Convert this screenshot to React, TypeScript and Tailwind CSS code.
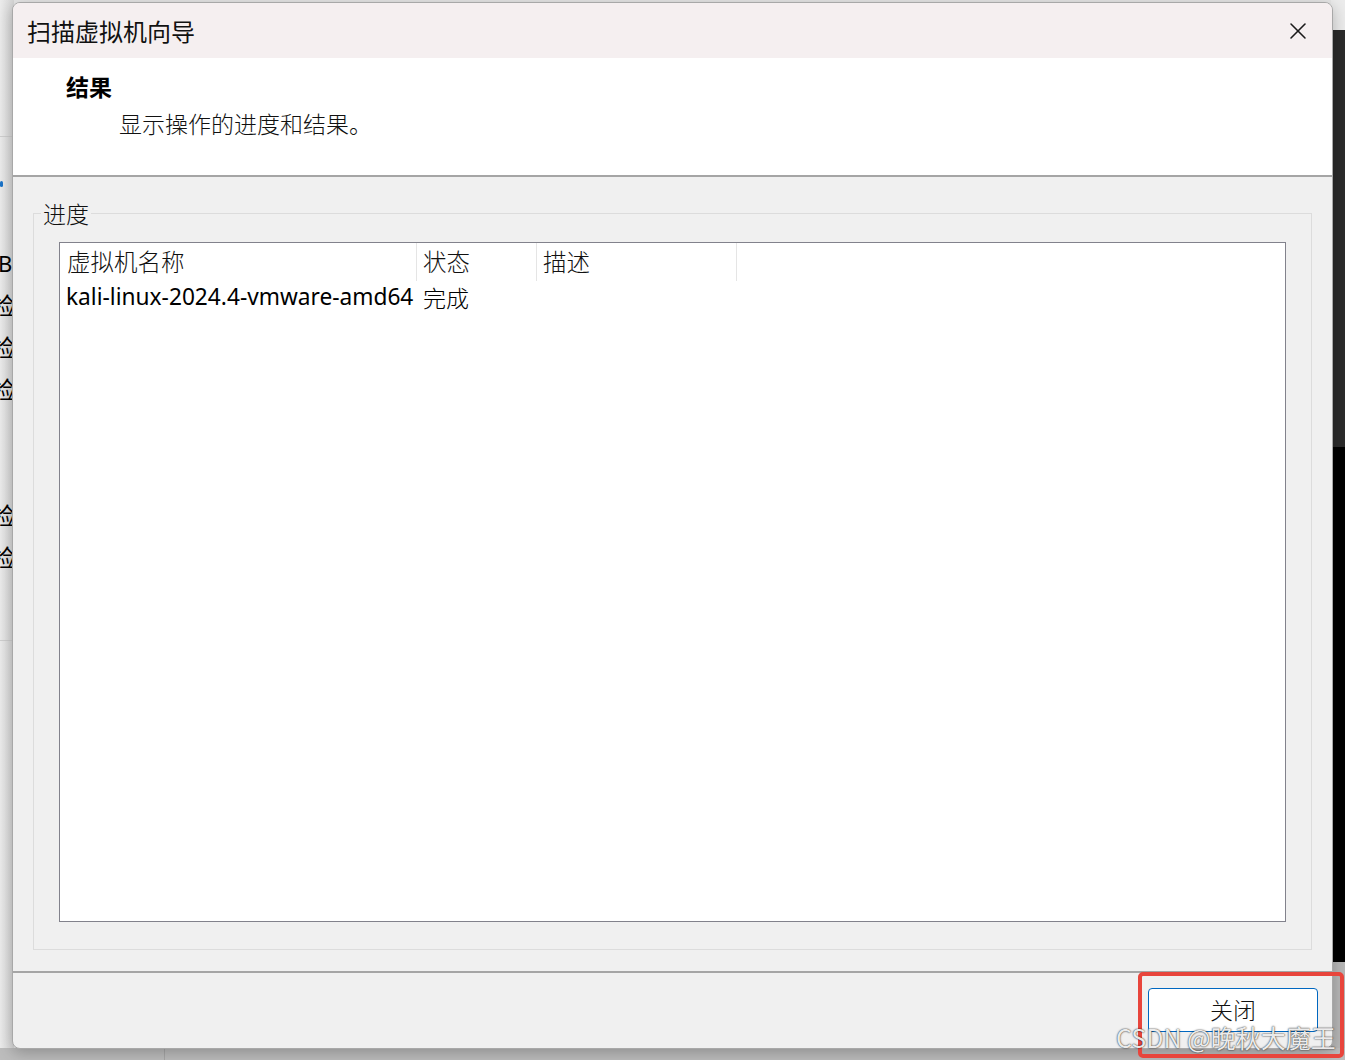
import { X } from "lucide-react";

const cjk = "font-['Noto_Sans_CJK_SC',sans-serif]";
const song = "font-['Noto_Sans_CJK_SC',sans-serif] font-light";

export default function App() {
  return (
    <div className="relative h-[1060px] w-[1345px] overflow-hidden bg-[#e6e6e6]">
      {/* app behind the dialog */}
      <div className="absolute left-0 top-0 h-full w-[14px] bg-gradient-to-r from-[#ececec] to-[#d6d6d6]">
        <div className="mt-[136px] h-px w-full bg-[#cfcfcf]" />
        <div className="mt-[44px] h-[6px] w-[3px] rounded-full bg-[#1a73c8]" />
        <div className={`${cjk} text-[24px] leading-[42px] text-black`}>
          <div className="-ml-[2px] mt-[55px] font-['Noto_Sans',sans-serif] text-[22px]">B</div>
          <div className="-ml-[8px]">检</div>
          <div className="-ml-[8px]">检</div>
          <div className="-ml-[8px]">检</div>
          <div className="-ml-[8px] mt-[84px]">检</div>
          <div className="-ml-[8px]">检</div>
        </div>
        <div className="mt-[62px] h-px w-full bg-[#cfcfcf]" />
      </div>
      <div className="absolute right-0 top-0 flex h-full w-[14px] flex-col">
        <div className="h-[30px] bg-[#ececec]" />
        <div className="h-[417px] bg-[#2b2b2b]" />
        <div className="h-[515px] bg-black" />
        <div className="flex-1 bg-[#b8b8b8]" />
      </div>
      <div className="absolute bottom-0 left-0 flex h-[12px] w-full bg-[#bdbdbd]">
        <div className="ml-[164px] h-full w-px bg-[#a8a8a8]" />
      </div>

      {/* dialog */}
      <div className="absolute left-[12px] top-[2px] flex h-[1047px] w-[1321px] flex-col overflow-hidden rounded-[8px] border border-[#a8a8a8] bg-[#f0f0f0] shadow-[0_4px_16px_rgba(0,0,0,0.25)]">
        <div className="flex h-[55px] shrink-0 items-center justify-between bg-[#f5eff0] pl-[14px] pr-[20px]">
          <span className={`${cjk} text-[24px] text-[#111]`}>扫描虚拟机向导</span>
          <X className="h-[28px] w-[28px] text-[#1a1a1a]" strokeWidth={1.3} />
        </div>
        <div className="h-[119px] shrink-0 border-b-2 border-[#a5a5a5] bg-white pl-[53px] pt-[12px]">
          <div className={`${cjk} text-[23px] font-semibold leading-[32px] text-black`}>结果</div>
          <div className={`${song} ml-[53px] mt-[5px] text-[23px] leading-[32px] text-[#111]`}>
            显示操作的进度和结果。
          </div>
        </div>
        <div className="flex flex-1 flex-col px-[20px] pt-[36px]">
          <div className="relative flex h-[737px] flex-col border border-[#dcdcdc] px-[25px] pb-[27px] pt-[28px]">
            <span className={`${song} absolute -top-[15px] left-[7px] bg-[#f0f0f0] px-[2px] text-[23px] leading-[28px] text-[#111]`}>
              进度
            </span>
            <div className="flex flex-1 flex-col border border-[#82828c] bg-white">
              <div className={`${song} flex h-[38px] items-center text-[23.5px] text-[#111]`}>
                <div className="flex h-full w-[357px] items-center border-r border-[#e5e5e5] pl-[7px]">虚拟机名称</div>
                <div className="flex h-full w-[120px] items-center border-r border-[#e5e5e5] pl-[6px]">状态</div>
                <div className="flex h-full w-[200px] items-center border-r border-[#e5e5e5] pl-[6px]">描述</div>
              </div>
              <div className="flex h-[32px] items-center text-[23px] text-black">
                <div className="w-[357px] whitespace-nowrap pl-[6px] font-['Noto_Sans',sans-serif] text-[22.7px]">
                  kali-linux-2024.4-vmware-amd64
                </div>
                <div className={`${song} pl-[6px]`}>完成</div>
              </div>
            </div>
          </div>
        </div>
        <div className="flex h-[77px] shrink-0 items-center justify-end border-t-2 border-[#a5a5a5] pr-[14px]">
          <button className={`${song} mb-[2px] h-[44px] w-[170px] rounded-[4px] border border-[#0067c0] bg-white text-[23px] text-[#111]`}>
            关闭
          </button>
        </div>
      </div>

      {/* annotation + watermark */}
      <div className="absolute left-[1138px] top-[972px] h-[86px] w-[206px] rounded-[5px] border-[4px] border-[#e8453c]" />
      <div className={`${cjk} absolute left-[1116px] top-[1020px] whitespace-nowrap text-[25px] leading-[34px] text-white/90 [text-shadow:0_0_2px_rgba(0,0,0,0.7),0_0_1px_rgba(0,0,0,0.6)]`}>
        CSDN @晚秋大魔王
      </div>
    </div>
  );
}
